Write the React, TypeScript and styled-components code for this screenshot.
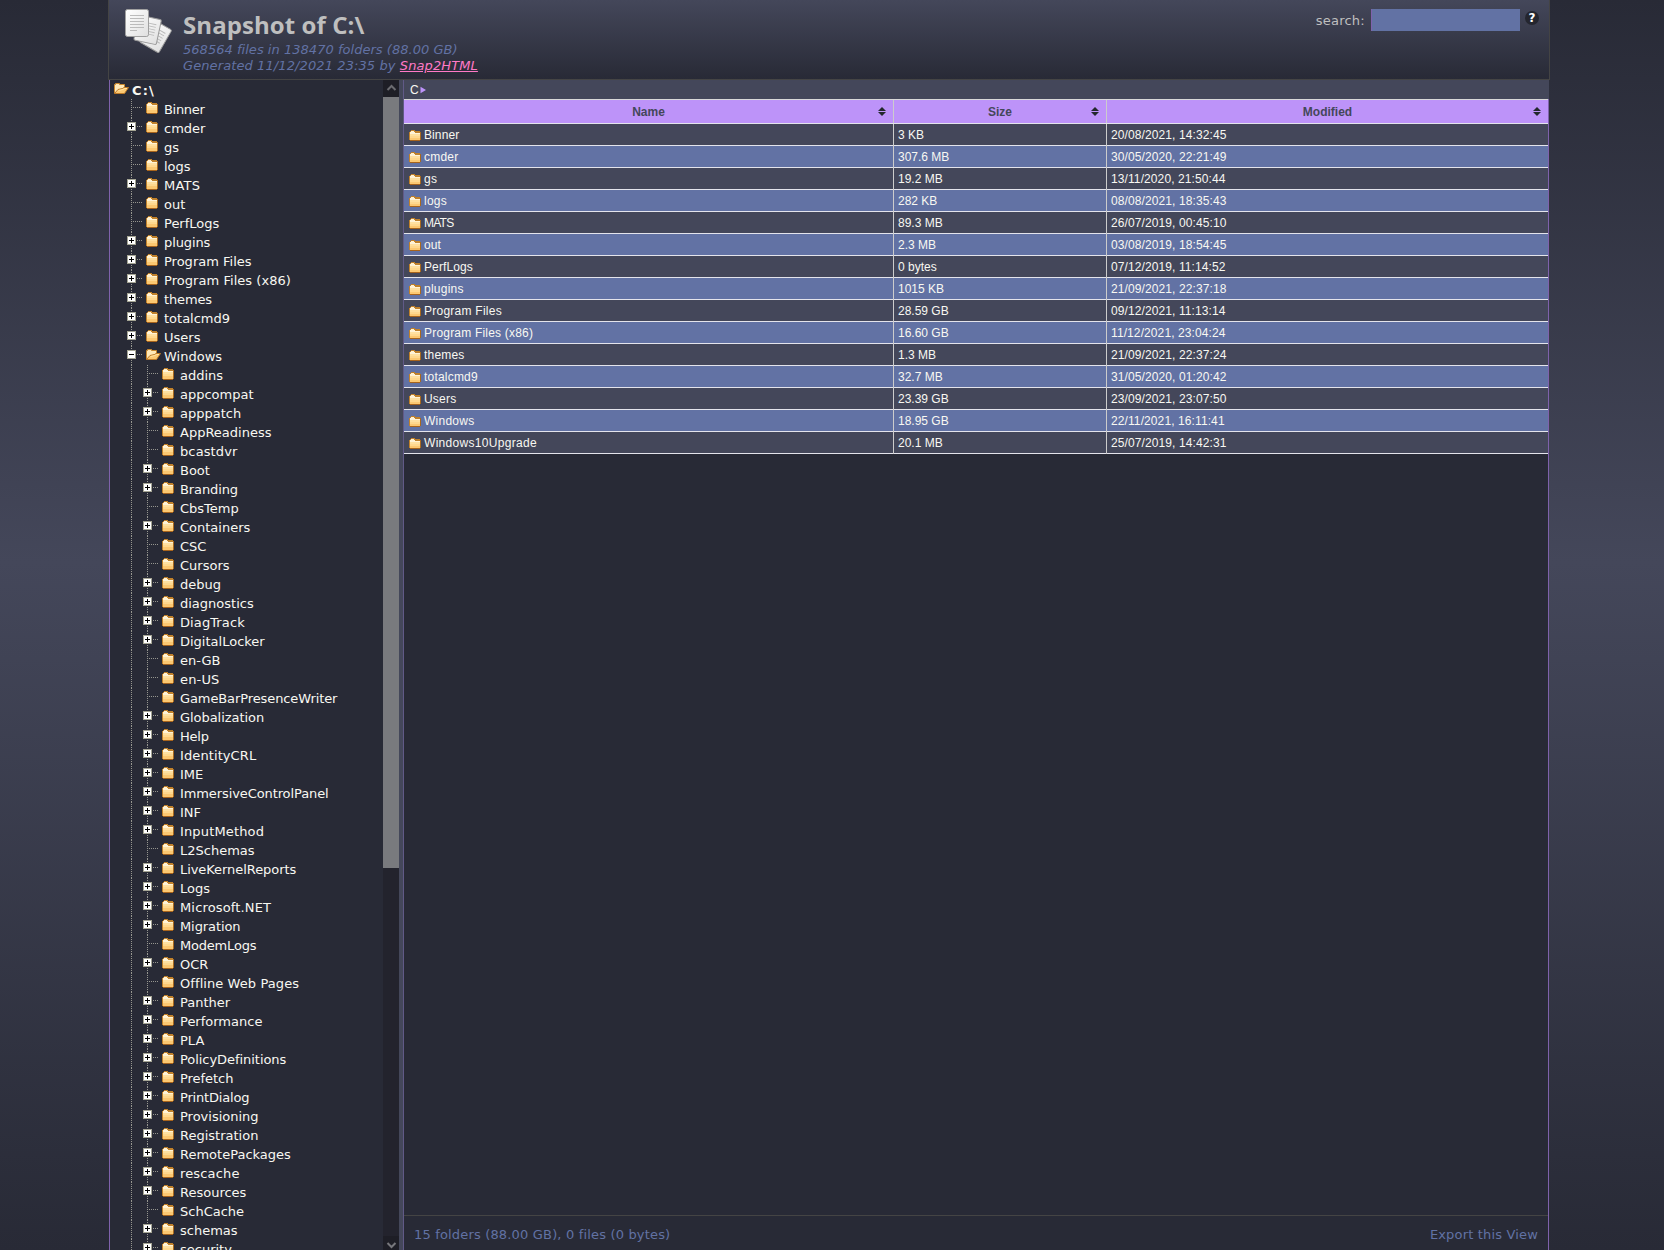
import React from "react";
import styled, { createGlobalStyle } from "styled-components";

const Global = createGlobalStyle`
  * { box-sizing: border-box; }
  html, body { margin: 0; padding: 0; height: 1250px; overflow: hidden; }
  body {
    background: linear-gradient(to bottom, #282a36 0, #44475a 45%, #282a36 100%);
    font-family: Verdana, "DejaVu Sans", sans-serif;
  }
`;

const Page = styled.div`
  width: 1442px;
  height: 1250px;
  margin-left: 108px;
  display: flex;
  flex-direction: column;
`;

const Header = styled.header`
  height: 80px;
  flex: none;
  display: flex;
  border: 1px solid #444;
  border-top: 0;
  background: linear-gradient(to bottom, #44475a, #282a36);
  padding: 9px 10px 0 16px;
`;

const HeaderText = styled.div`
  margin-left: 9px;
  padding-left: 1px;
  flex: 1;
`;

const Title = styled.h1`
  margin: 2px 0 4px;
  font: bold 24px/27px "Trebuchet MS", "Open Sans", sans-serif;
  letter-spacing: 0.08px;
  color: #bfbfbf;
  white-space: nowrap;
`;

const Meta = styled.div<{ $spacing: number }>`
  font-size: 13px;
  line-height: 16px;
  height: 16px;
  font-style: italic;
  letter-spacing: ${(p) => p.$spacing}px;
  color: #6272a4;
  white-space: nowrap;
`;

const ProductLink = styled.a`
  color: #ff79c6;
  text-decoration: underline;
`;

const Search = styled.label`
  display: flex;
  align-items: flex-start;
  font-size: 13px;
  line-height: 23px;
  letter-spacing: 0.25px;
  color: #bfbfbf;
`;

const SearchInput = styled.input`
  width: 149px;
  height: 22px;
  margin: 0 5px 0 6px;
  border: 0;
  border-left: 1px solid #7f62ac;
  background: #6272a4;
  border-radius: 0;
  outline: 0;
`;

const Help = styled.span`
  width: 14px;
  height: 14px;
  margin-top: 2px;
  border-radius: 50%;
  background: #24262f;
  color: #fff;
  font: bold 12px/15px "DejaVu Sans", sans-serif;
  text-align: center;
  letter-spacing: 0;
`;

const Main = styled.main`
  flex: 1;
  min-height: 0;
  margin: 0 1px;
  display: flex;
  border-left: 1px solid #7f62ac;
  background: #282a36;
`;

const Tree = styled.nav`
  width: 273px;
  flex: none;
  height: 1170px;
  overflow: hidden;
  padding-left: 4px;
`;

const RootRow = styled.div`
  height: 19px;
  display: flex;
  align-items: flex-start;
  color: #f8f8f2;
  font-weight: bold;
  font-size: 13px;
  line-height: 21px;
  letter-spacing: 1.1px;
`;

const TreeRow = styled.div`
  height: 19px;
  display: flex;
`;

const TreeLabel = styled.span<{ $spacing: number }>`
  margin-left: 6px;
  color: #f8f8f2;
  font-size: 13px;
  line-height: 21px;
  letter-spacing: ${(p) => p.$spacing}px;
  white-space: nowrap;
`;

const TreeIcon = styled.svg`
  flex: none;
  display: block;
`;

const ScrollBar = styled.div`
  width: 16px;
  flex: none;
  display: flex;
  flex-direction: column;
  background: #23232d;
`;

const ScrollButton = styled.div<{ $h: number }>`
  height: ${(p) => p.$h}px;
  background: #1e1e26;
`;

const Thumb = styled.div`
  height: 771px;
  background: #797a7e;
  margin-bottom: auto;
`;

const Splitter = styled.div`
  width: 5px;
  flex: none;
  background: #44475a;
  border-right: 1px solid #615a87;
`;

const Content = styled.section`
  width: 1145px;
  display: flex;
  flex-direction: column;
`;

const PathBar = styled.div`
  height: 19px;
  flex: none;
  display: flex;
  align-items: center;
  padding: 1px 0 0 6px;
  background: #44475a;
  color: #f8f8f2;
  font: 12px/19px "Liberation Sans", Arial, sans-serif;
`;

const Listing = styled.div`
  flex: 1;
  border-right: 1px solid #7f62ac;
  display: flex;
  flex-direction: column;
`;

const grid = "489px 213px 1fr";

const HeadRow = styled.div`
  height: 25px;
  display: grid;
  grid-template-columns: ${grid};
  border-top: 1px solid #d8d8d8;
  border-bottom: 1px solid #e4e4ec;
  background: #bd93f9;
`;

const HeadCell = styled.div`
  display: flex;
  align-items: center;
  padding: 0 7px 0 15px;
  font: bold 12px/22px "Liberation Sans", Arial, sans-serif;
  color: #44475a;
  & + & { border-left: 1px solid #ccc; }
`;

const HeadLabel = styled.span`
  flex: 1;
  text-align: center;
`;

const Row = styled.div<{ $alt: boolean }>`
  height: 22px;
  display: grid;
  grid-template-columns: ${grid};
  border-bottom: 1px solid #e4e4ec;
  background: ${(p) => (p.$alt ? "#6272a4" : "#44475a")};
`;

const Cell = styled.div<{ $spacing?: number }>`
  display: flex;
  align-items: flex-start;
  padding-left: 4px;
  font: 12px/22px "Liberation Sans", Arial, sans-serif;
  letter-spacing: ${(p) => p.$spacing ?? 0}px;
  color: #f8f8f2;
  white-space: nowrap;
  & + & { border-left: 1px solid #ccc; }
`;

const NameCell = styled(Cell)`
  padding-left: 5px;
  svg { margin: 6px 3px 0 0; }
`;

const Footer = styled.footer`
  height: 35px;
  margin-top: auto;
  flex: none;
  display: flex;
  justify-content: space-between;
  padding: 1px 10px 0 10px;
  border-top: 1px solid #444;
  color: #6272a4;
  font-size: 13px;
  line-height: 36px;
  letter-spacing: 0.17px;
`;

function FolderShape({ short }: { short?: boolean }) {
  const h = short ? 10 : 11;
  return (
    <g shapeRendering="crispEdges">
      <path d={`M2 0h4v1h5v1h1v${h - 2}H0V2h1V1h1z`} fill="#c0812b" />
      <path d={`M11 2h1v${h - 2}h-1z`} fill="#a8691f" />
      <path d="M2 1h3v1h1v1h5v1H1V2h1z" fill="#fff3d6" />
      <path d="M1 4h10v2H1z" fill="#ffe0a0" />
      <path d="M1 6h10v2H1z" fill="#ffd88e" />
      <path d={`M1 8h10v${h - 8}H1z`} fill="#fcc871" />
      <path d={`M1 ${h}h10v1H1z`} fill="#a8641c" />
    </g>
  );
}

function OpenFolderShape() {
  return (
    <g>
      <path d="M.5 10V1.500h1v-1h4v1h5v3" fill="#ffe9b8" stroke="#c9872d" />
      <path d="M.5 10.500L4 6.500L8.500 5.500L10 4.500H14.500L10.500 10.500z" fill="#fcc871" stroke="#bd7a28" />
      <path d="M4.500 7.500L9 6.500l1.500-1H13" stroke="#ffe3a5" fill="none" />
    </g>
  );
}

const treeSpacing: Record<string, number> = {
  Binner: -0.3,
  MATS: 0.2,
  themes: -0.15,
  plugins: -0.1,
  "Program Files (x86)": 0.05,
  bcastdvr: 0.12,
  Branding: -0.1,
  "en-US": 0.15,
  GameBarPresenceWriter: -0.1,
  Globalization: -0.05,
  Help: -0.2,
  ImmersiveControlPanel: -0.1,
  InputMethod: 0.15,
  LiveKernelReports: -0.06,
  "Microsoft.NET": 0.15,
  Migration: -0.1,
  ModemLogs: -0.2,
  "Offline Web Pages": 0.08,
  Prefetch: -0.05,
  PolicyDefinitions: -0.05,
  PrintDialog: -0.18,
  rescache: 0.15,
  IdentityCRL: 0.1,
  DiagTrack: 0.1,
};

const listSpacing: Record<string, number> = {
  Binner: 0.1,
  cmder: 0.2,
  gs: 0.3,
  logs: 0.25,
  MATS: -0.75,
  out: 0.1,
  PerfLogs: 0.1,
  plugins: 0.25,
  "Program Files": 0.25,
  "Program Files (x86)": 0.2,
  themes: 0.2,
  totalcmd9: 0.2,
  Users: 0.2,
  Windows: 0.25,
  Windows10Upgrade: 0.3,
};

interface NodeProps {
  name: string;
  level: number;
  mark: string;
}

function TreeNode({ name, level, mark }: NodeProps) {
  const x = level === 1 ? 17 : 33;
  const open = mark === "-";
  return (
    <TreeRow>
      <TreeIcon width={x + 27} height="19" overflow="visible">
        <g stroke="#96968f" strokeDasharray="1 1" shapeRendering="crispEdges">
          {level === 2 && <path d="M17.500 0V19" />}
          <path d={`M${x + 0.5} 0V19`} />
          <path d={`M${x} 8.500H${x + 11}`} />
        </g>
        {mark && (
          <g shapeRendering="crispEdges">
            <rect x={x - 4} y="4" width="9" height="9" fill="#a5a594" />
            <rect x={x - 3} y="5" width="7" height="7" fill="#fff" />
            <path d={`M${x - 2} 8h5v1h-5z`} fill="#000" />
            {mark === "+" && <path d={`M${x} 6h1v5h-1z`} fill="#000" />}
          </g>
        )}
        <g transform={`translate(${x + 15} 3)`}>{open ? <OpenFolderShape /> : <FolderShape />}</g>
      </TreeIcon>
      <TreeLabel $spacing={treeSpacing[name] ?? 0}>{name}</TreeLabel>
    </TreeRow>
  );
}

const top = ["Binner", "+cmder", "gs", "logs", "+MATS", "out", "PerfLogs", "+plugins", "+Program Files", "+Program Files (x86)", "+themes", "+totalcmd9", "+Users", "-Windows"];
const inner = ["addins", "+appcompat", "+apppatch", "AppReadiness", "bcastdvr", "+Boot", "+Branding", "CbsTemp", "+Containers", "CSC", "Cursors", "+debug", "+diagnostics", "+DiagTrack", "+DigitalLocker", "en-GB", "en-US", "GameBarPresenceWriter", "+Globalization", "+Help", "+IdentityCRL", "+IME", "+ImmersiveControlPanel", "+INF", "+InputMethod", "L2Schemas", "+LiveKernelReports", "+Logs", "+Microsoft.NET", "+Migration", "ModemLogs", "+OCR", "Offline Web Pages", "+Panther", "+Performance", "+PLA", "+PolicyDefinitions", "+Prefetch", "+PrintDialog", "+Provisioning", "+Registration", "+RemotePackages", "+rescache", "+Resources", "SchCache", "+schemas", "+security"];

function nodes(list: string[], level: number) {
  return list.map((entry) => {
    const mark = /^[+-]/.test(entry) ? entry[0] : "";
    return <TreeNode key={entry} name={mark ? entry.slice(1) : entry} level={level} mark={mark} />;
  });
}

const rows = [
  ["Binner", "3 KB", "20/08/2021, 14:32:45"],
  ["cmder", "307.6 MB", "30/05/2020, 22:21:49"],
  ["gs", "19.2 MB", "13/11/2020, 21:50:44"],
  ["logs", "282 KB", "08/08/2021, 18:35:43"],
  ["MATS", "89.3 MB", "26/07/2019, 00:45:10"],
  ["out", "2.3 MB", "03/08/2019, 18:54:45"],
  ["PerfLogs", "0 bytes", "07/12/2019, 11:14:52"],
  ["plugins", "1015 KB", "21/09/2021, 22:37:18"],
  ["Program Files", "28.59 GB", "09/12/2021, 11:13:14"],
  ["Program Files (x86)", "16.60 GB", "11/12/2021, 23:04:24"],
  ["themes", "1.3 MB", "21/09/2021, 22:37:24"],
  ["totalcmd9", "32.7 MB", "31/05/2020, 01:20:42"],
  ["Users", "23.39 GB", "23/09/2021, 23:07:50"],
  ["Windows", "18.95 GB", "22/11/2021, 16:11:41"],
  ["Windows10Upgrade", "20.1 MB", "25/07/2019, 14:42:31"],
];

function Logo() {
  const lines = "M5 6.500H19M5 9.500H19M5 12.500H19M5 15.500H19M5 18.500H19M5 21.500H12";
  return (
    <svg width="48" height="48">
      <defs>
        <linearGradient id="paper" x1="0" y1="0" x2="1" y2="1">
          <stop offset="0" stopColor="#fff" />
          <stop offset="1" stopColor="#e0e0e0" />
        </linearGradient>
      </defs>
      <g transform="translate(27.500 10) rotate(30) scale(.97 .94)">
        <rect x="0" y="0" width="23" height="28" rx="1.500" fill="url(#paper)" stroke="#999" />
        <path d={lines} stroke="#bbb" />
      </g>
      <g transform="translate(14 6) rotate(12) scale(1 .91)">
        <rect x="0" y="0" width="23" height="28" rx="1.500" fill="url(#paper)" stroke="#999" />
        <path d={lines} stroke="#bbb" />
      </g>
      <rect x=".5" y=".5" width="23" height="27" rx="2" fill="url(#paper)" stroke="#a0a0a0" />
      <path d={lines} stroke="#bbb" />
    </svg>
  );
}

export default function App() {
  return (
    <>
      <Global />
      <Page>
        <Header>
          <Logo />
          <HeaderText>
            <Title>Snapshot of C:\</Title>
            <Meta $spacing={0.03}>568564 files in 138470 folders (88.00 GB)</Meta>
            <Meta $spacing={0.1}>Generated 11/12/2021 23:35 by <ProductLink>Snap2HTML</ProductLink></Meta>
          </HeaderText>
          <Search>search:<SearchInput /><Help>?</Help></Search>
        </Header>
        <Main>
          <Tree>
            <RootRow>
              <TreeIcon width="18" height="19"><g transform="translate(0 3)"><OpenFolderShape /></g></TreeIcon>C:\
            </RootRow>
            {nodes(top, 1)}
            {nodes(inner, 2)}
          </Tree>
          <ScrollBar>
            <ScrollButton $h={17}><svg width="16" height="17"><path d="M4.500 10L8.500 6L12.500 10" fill="none" stroke="#6b6b70" strokeWidth="2" /></svg></ScrollButton>
            <Thumb />
            <ScrollButton $h={14}><svg width="16" height="14"><path d="M4.500 6L8.500 10L12.500 6" fill="none" stroke="#77777c" strokeWidth="2" /></svg></ScrollButton>
          </ScrollBar>
          <Splitter />
          <Content>
            <PathBar>C<svg width="8" height="8"><path d="M1.500 .8V7.200L7 4z" fill="#bd93f9" /></svg></PathBar>
            <Listing>
              <HeadRow>
                {["Name", "Size", "Modified"].map((label) => (
                  <HeadCell key={label}>
                    <HeadLabel>{label}</HeadLabel>
                    <svg width="8" height="9"><path d="M0 4L4 0L8 4zM0 5H8L4 9z" fill="#23282d" /></svg>
                  </HeadCell>
                ))}
              </HeadRow>
              {rows.map(([name, size, date], i) => (
                <Row key={name} $alt={i % 2 === 1}>
                  <NameCell $spacing={listSpacing[name]}><svg width="12" height="12"><FolderShape short /></svg>{name}</NameCell>
                  <Cell>{size}</Cell>
                  <Cell $spacing={0.1}>{date}</Cell>
                </Row>
              ))}
              <Footer><span>15 folders (88.00 GB), 0 files (0 bytes)</span><span>Export this View</span></Footer>
            </Listing>
          </Content>
        </Main>
      </Page>
    </>
  );
}
